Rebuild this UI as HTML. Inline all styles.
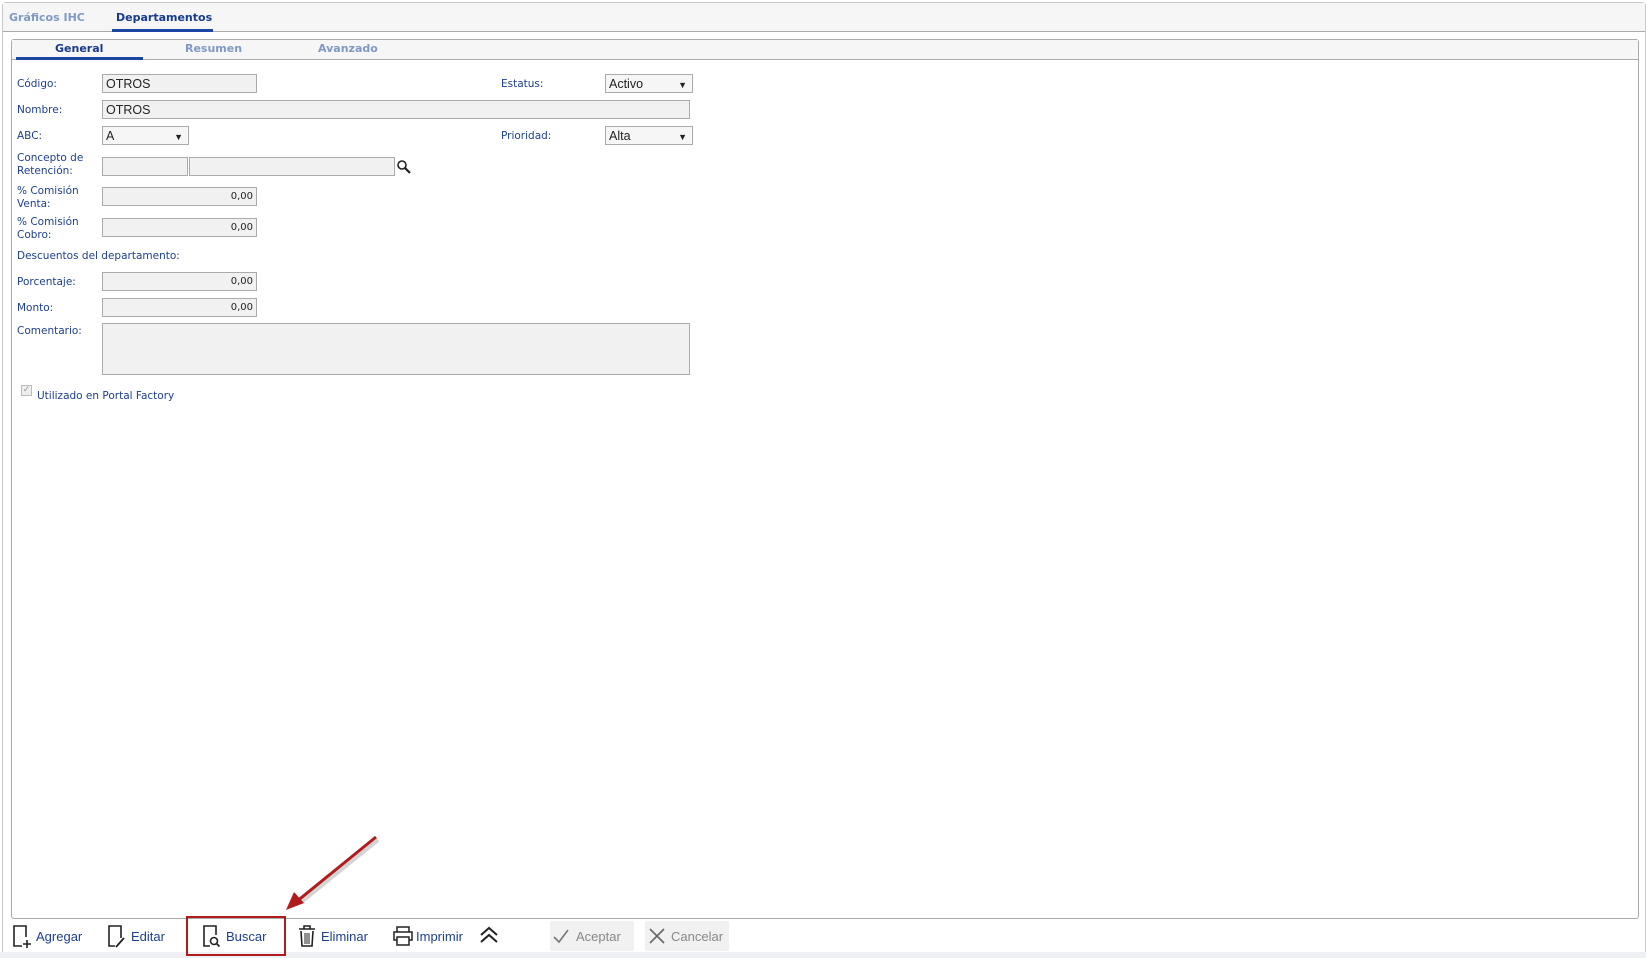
<!DOCTYPE html>
<html><head><meta charset="utf-8"><style>
*{box-sizing:border-box;margin:0;padding:0}
body{width:1646px;height:958px;background:#fff;font-family:"DejaVu Sans","Liberation Sans",sans-serif;font-size:10.5px;color:#1d3f8c;position:relative;overflow:hidden}
.a{position:absolute;white-space:nowrap}
.inp{position:absolute;background:#f1f1f1;border:1px solid #aaa;height:19px;font-family:"Liberation Sans",sans-serif;font-size:12.5px;color:#222;padding:1px 3px;line-height:16px}
.num{text-align:right;font-size:10px;font-family:"DejaVu Sans",sans-serif;line-height:16px}
.sel::after{content:"▼";position:absolute;right:5px;top:2px;font-size:9px;color:#222}
.lab{position:absolute;line-height:13px;margin-top:1px}
.tb{position:absolute;top:929px;font-size:13px;font-family:"Liberation Sans",sans-serif;color:#1d3f8c}
</style></head><body>
<div class="a" style="left:2px;top:2px;width:1644px;height:956px;border:1px solid #c8c8c8;border-radius:4px 4px 0 0"></div>
<div class="a" style="left:3px;top:3px;width:1642px;height:29px;background:#f6f6f6;border-bottom:1px solid #aaa"></div>
<div class="a" style="left:9px;top:11px;font-weight:bold;color:#7f99c5;font-size:11px">Gráficos IHC</div>
<div class="a" style="left:116px;top:11px;font-weight:bold;color:#163a8c;font-size:11px">Departamentos</div>
<div class="a" style="left:112px;top:29px;width:101px;height:3px;background:#1a45a0"></div>

<div class="a" style="left:11px;top:39px;width:1628px;height:880px;border:1px solid #aaa;border-radius:3px"></div>
<div class="a" style="left:12px;top:40px;width:1626px;height:20px;background:#f6f6f6;border-bottom:1px solid #aaa"></div>
<div class="a" style="left:55px;top:42px;font-weight:bold;color:#163a8c;font-size:11px">General</div>
<div class="a" style="left:185px;top:42px;font-weight:bold;color:#7f99c5;font-size:11px">Resumen</div>
<div class="a" style="left:318px;top:42px;font-weight:bold;color:#7f99c5;font-size:11px">Avanzado</div>
<div class="a" style="left:16px;top:57px;width:127px;height:3px;background:#1a45a0"></div>

<div class="lab" style="left:17px;top:77px">Código:</div>
<div class="inp" style="left:102px;top:74px;width:155px">OTROS</div>
<div class="lab" style="left:501px;top:77px">Estatus:</div>
<div class="inp sel" style="left:605px;top:74px;width:88px;background:#f6f6f6">Activo</div>
<div class="lab" style="left:17px;top:103px">Nombre:</div>
<div class="inp" style="left:102px;top:100px;width:588px">OTROS</div>
<div class="lab" style="left:17px;top:129px">ABC:</div>
<div class="inp sel" style="left:102px;top:126px;width:87px;background:#f6f6f6">A</div>
<div class="lab" style="left:501px;top:129px">Prioridad:</div>
<div class="inp sel" style="left:605px;top:126px;width:88px;background:#f6f6f6">Alta</div>
<div class="lab" style="left:17px;top:151px">Concepto de<br>Retención:</div>
<div class="inp" style="left:102px;top:157px;width:86px"></div>
<div class="inp" style="left:189px;top:157px;width:206px"></div>
<svg class="a" style="left:396px;top:159px" width="16" height="16" viewBox="0 0 16 16"><circle cx="6" cy="6" r="4" fill="none" stroke="#222" stroke-width="1.6"/><path d="M9 9l5 5" stroke="#222" stroke-width="2.2"/></svg>
<div class="lab" style="left:17px;top:184px">% Comisión<br>Venta:</div>
<div class="inp num" style="left:102px;top:187px;width:155px">0,00</div>
<div class="lab" style="left:17px;top:215px">% Comisión<br>Cobro:</div>
<div class="inp num" style="left:102px;top:218px;width:155px">0,00</div>
<div class="lab" style="left:17px;top:249px">Descuentos del departamento:</div>
<div class="lab" style="left:17px;top:275px">Porcentaje:</div>
<div class="inp num" style="left:102px;top:272px;width:155px">0,00</div>
<div class="lab" style="left:17px;top:301px">Monto:</div>
<div class="inp num" style="left:102px;top:298px;width:155px">0,00</div>
<div class="lab" style="left:17px;top:324px">Comentario:</div>
<div class="inp" style="left:102px;top:323px;width:588px;height:52px"></div>
<div class="a" style="left:21px;top:385px;width:11px;height:11px;border:1px solid #bbb;background:#eee;font-size:9px;color:#999;line-height:9px;text-align:center">✓</div>
<div class="lab" style="left:37px;top:389px">Utilizado en Portal Factory</div>

<div class="a" style="left:0;top:952px;width:1646px;height:6px;background:#eef0f3"></div>
<svg class="a" style="left:12px;top:924px" width="22" height="26" viewBox="0 0 22 26"><path d="M10 22H2V2h12v11" fill="none" stroke="#222" stroke-width="1.6"/><path d="M15 16v8M11 20h8" stroke="#222" stroke-width="1.6"/></svg>
<div class="tb" style="left:36px">Agregar</div>
<svg class="a" style="left:107px;top:924px" width="22" height="26" viewBox="0 0 22 26"><path d="M8 22H2V2h12v12" fill="none" stroke="#222" stroke-width="1.6"/><path d="M9 23l8-9" stroke="#222" stroke-width="1.8"/></svg>
<div class="tb" style="left:131px">Editar</div>
<div class="a" style="left:186px;top:916px;width:100px;height:40px;border:2px solid #b01c1c"></div>
<svg class="a" style="left:202px;top:924px" width="22" height="26" viewBox="0 0 22 26"><path d="M8 22H2V2h12v9" fill="none" stroke="#222" stroke-width="1.6"/><circle cx="12" cy="17" r="3.5" fill="none" stroke="#222" stroke-width="1.6"/><path d="M14.5 19.5l3 3" stroke="#222" stroke-width="1.8"/></svg>
<div class="tb" style="left:226px">Buscar</div>
<svg class="a" style="left:297px;top:924px" width="20" height="24" viewBox="0 0 20 24"><path d="M2 5h16M7 5V2h6v3M4 7l1 15h10l1-15" fill="none" stroke="#222" stroke-width="1.6"/><path d="M8 9v11M10 9v11M12 9v11" stroke="#222" stroke-width="1"/></svg>
<div class="tb" style="left:321px">Eliminar</div>
<svg class="a" style="left:392px;top:925px" width="22" height="22" viewBox="0 0 22 22"><path d="M5 7V2h12v5M5 15H2V7h18v8h-3M5 12h12v8H5z" fill="none" stroke="#222" stroke-width="1.5"/></svg>
<div class="tb" style="left:416px">Imprimir</div>
<svg class="a" style="left:479px;top:926px" width="20" height="18" viewBox="0 0 20 18"><path d="M2 9l8-7 8 7M2 16l8-7 8 7" fill="none" stroke="#222" stroke-width="2"/></svg>
<div class="a" style="left:550px;top:921px;width:84px;height:30px;background:#f1f1f1;border-radius:2px"></div>
<svg class="a" style="left:552px;top:928px" width="18" height="16" viewBox="0 0 18 16"><path d="M2 9l5 5L16 2" fill="none" stroke="#777" stroke-width="1.6"/></svg>
<div class="tb" style="left:576px;color:#888">Aceptar</div>
<div class="a" style="left:645px;top:921px;width:84px;height:30px;background:#f1f1f1;border-radius:2px"></div>
<svg class="a" style="left:648px;top:927px" width="18" height="18" viewBox="0 0 18 18"><path d="M2 2l14 14M16 2L2 16" stroke="#666" stroke-width="1.6"/></svg>
<div class="tb" style="left:671px;color:#888">Cancelar</div>
<svg class="a" style="left:0;top:0;pointer-events:none" width="1646" height="958"><line x1="376" y1="837" x2="298" y2="900" stroke="#aaa" stroke-width="4" opacity="0.5" transform="translate(2,3)"/><line x1="376" y1="837" x2="296" y2="902" stroke="#b01c1c" stroke-width="3"/><path d="M286 910l8-18 10 11z" fill="#b01c1c"/></svg>
</body></html>
